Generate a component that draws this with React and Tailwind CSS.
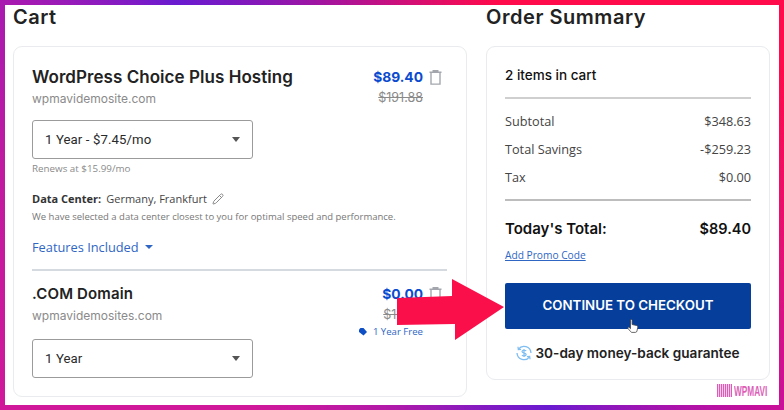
import { Pencil } from "lucide-react"

const HEAD = "font-['Inter','Noto_Sans',sans-serif]"

function Trash() {
  return (
    <svg width="13" height="15" viewBox="0 0 13 15" fill="none" stroke="#a3a7ad" strokeWidth="1.4">
      <path d="M0.5 2.2h12M4.2 2V0.7h4.6V2" />
      <path d="M2 2.5v11.6h9V2.5" />
    </svg>
  )
}

function Select({ label }) {
  return (
    <div className="w-[221px] h-[39px] border border-[#9b9b9b] rounded-[3px] flex items-center justify-between pl-[12px] pr-[12px] text-[13.2px] tracking-[0.1px] text-[#2a2a2a] font-['Roboto',sans-serif]">
      <span>{label}</span>
      <span className="w-0 h-0 border-x-[4px] border-x-transparent border-t-[5px] border-t-[#555]" />
    </div>
  )
}

function Row({ label, value }) {
  return (
    <div className="flex justify-between h-[28px] items-center text-[12.7px] text-[#444]">
      <span>{label}</span>
      <span>{value}</span>
    </div>
  )
}

export default function App() {
  return (
    <div className="relative w-[784px] h-[410px] p-[5px] overflow-hidden bg-[conic-gradient(#c8107e_0deg,#ff0a4a_28deg,#ff0a4a_70deg,#e0107a_100deg,#c8109a_118deg,#6a1bd0_142deg,#b01aa8_180deg,#d0189a_215deg,#d0189a_242deg,#c01aa0_275deg,#a81ab0_298deg,#6a1bd0_313deg,#c8107e_360deg)]">
      <div className="w-full h-full bg-white overflow-hidden flex gap-[19px] pl-[8px] font-['Open_Sans',sans-serif]">
        {/* Cart */}
        <div className="w-[454px] shrink-0">
          <h2 className={`${HEAD} text-[20px] leading-[24px] font-semibold text-[#222] mb-[17px] tracking-[0.5px]`}>Cart</h2>
          <div className="h-[351px] border border-[#e9ebee] rounded-[9px] pt-[19px] pl-[18px] pr-[19px]">
            <div className="flex justify-between">
              <div>
                <div className={`${HEAD} text-[17px] leading-[22px] font-semibold text-[#222] tracking-[0.05px]`}>WordPress Choice Plus Hosting</div>
                <div className={`${HEAD} text-[12px] leading-[22px] text-[#8a8a8a] mb-[10px]`}>wpmavidemosite.com</div>
              </div>
              <div className="flex flex-col items-end pr-[5px]">
                <div className="flex items-center gap-[6px]">
                  <span className={`${HEAD} text-[13.8px] leading-[22px] font-bold text-[#0b4bd0]`}>$89.40</span>
                  <Trash />
                </div>
                <span className={`${HEAD} text-[12.5px] leading-[20px] text-[#8a8a8a] line-through mr-[19px]`}>$191.88</span>
              </div>
            </div>
            <Select label="1 Year - $7.45/mo" />
            <div className="text-[9.8px] leading-[14px] mt-[3px] text-[#8a8a8a]">Renews at $15.99/mo</div>
            <div className="flex items-center text-[11px] leading-[16px] mt-[15px] text-[#444]">
              <span className="font-bold text-[#333] mr-[5px]">Data Center:</span>
              Germany, Frankfurt
              <Pencil size={12} className="ml-[5px] text-[#888]" />
            </div>
            <div className="text-[9.5px] leading-[14px] mt-[3px] text-[#777]">We have selected a data center closest to you for optimal speed and performance.</div>
            <div className="flex items-center text-[12.8px] leading-[18px] mt-[14px] text-[#2f66c4]">
              Features Included
              <span className="ml-[6px] w-0 h-0 border-x-[4px] border-x-transparent border-t-[4px] border-t-[#2f66c4]" />
            </div>
            <div className="h-[2px] bg-[#d5d9e0] mt-[13px] mb-[12px]" />
            <div className="flex justify-between">
              <div>
                <div className={`${HEAD} text-[15px] leading-[22px] font-semibold text-[#222] tracking-[0.15px]`}>.COM Domain</div>
                <div className={`${HEAD} text-[12px] leading-[22px] text-[#8a8a8a] mb-[12px]`}>wpmavidemosites.com</div>
              </div>
              <div className="flex flex-col items-end pr-[5px]">
                <div className="flex items-center gap-[6px]">
                  <span className={`${HEAD} text-[13.8px] leading-[22px] font-bold text-[#0b4bd0]`}>$0.00</span>
                  <Trash />
                </div>
                <span className={`${HEAD} text-[12.5px] leading-[20px] text-[#8a8a8a] line-through mr-[19px]`}>$12.99</span>
                <div className="flex items-center text-[9.6px] leading-[14px] text-[#2f66c4] mr-[19px]">
                  <svg width="8" height="8" viewBox="0 0 8 8" className="mr-[6px]">
                    <path d="M0 1.5 1.5 0H4.5L8 4 4.5 7.5 0 4Z" fill="#0f4fc6" />
                  </svg>
                  1 Year Free
                </div>
              </div>
            </div>
            <Select label="1 Year" />
          </div>
        </div>

        {/* Order summary */}
        <div className="w-[284px] shrink-0">
          <h2 className={`${HEAD} text-[20px] leading-[24px] font-semibold text-[#222] mb-[17px] tracking-[0.55px]`}>Order Summary</h2>
          <div className="h-[334px] border border-[#e9ebee] rounded-[9px] pt-[17px] px-[18px]">
            <div className={`${HEAD} text-[13.5px] leading-[22px] font-medium text-[#111] mb-[11px]`}>2 items in cart</div>
            <div className="h-[2px] bg-[#cfcfcf] mb-[9px]" />
            <Row label="Subtotal" value="$348.63" />
            <Row label="Total Savings" value="-$259.23" />
            <Row label="Tax" value="$0.00" />
            <div className="h-[2px] bg-[#bdbdbd] mt-[7px] mb-[17px]" />
            <div className={`${HEAD} flex justify-between text-[15px] leading-[22px] font-semibold text-[#111]`}>
              <span>Today's Total:</span>
              <span className="text-[14.5px]">$89.40</span>
            </div>
            <div className="text-[10.2px] leading-[14px] mt-[8px] text-[#2f66c4] underline">Add Promo Code</div>
            <div className={`${HEAD} h-[46px] mt-[21px] bg-[#063f9b] rounded-[2px] flex items-center justify-center text-[13.3px] font-semibold text-white`}>
              CONTINUE TO CHECKOUT
            </div>
            <div className={`${HEAD} flex items-center justify-center mt-[13px] text-[13.6px] leading-[22px] font-semibold text-[#222]`}>
              <svg width="16" height="16" viewBox="0 0 16 16" fill="none" stroke="#7dbdf2" className="mr-[3px]">
                <path d="M2.4 4.2A7 7 0 0 1 15 8M13.6 11.8A7 7 0 0 1 1 8" strokeWidth="1.3" />
                <path d="M2 1.8l.3 2.7 2.7-.2M14 14.2l-.3-2.7-2.7.2" strokeWidth="1.2" />
                <path d="M10.2 6C9.6 5 6 4.8 6 6.6c0 2 4.2 1 4.2 3 0 1.8-3.6 1.6-4.2.5M8 4v8" strokeWidth="1.2" />
              </svg>
              30-day money-back guarantee
            </div>
          </div>
        </div>
      </div>

      {/* Red arrow over the cart and button */}
      <svg width="110" height="64" viewBox="0 0 110 64" className="absolute left-[396px] top-[278px]">
        <path d="M1 20 56 18V1L108 29 59 62V46L1 47Z" fill="#fb0f4b" />
      </svg>

      {/* Cursor over the button */}
      <svg width="12" height="15" viewBox="0 0 12 15" className="absolute left-[627px] top-[319px]">
        <path d="M3.5 1.2c0-1 1.6-1 1.6 0v4.3l4.4 1c1 .3 1.4 1 1.2 2l-.7 3.4c-.1.8-.7 1.5-1.5 1.5H5c-.6 0-1-.3-1.4-.8L1 9.5c-.6-.9.5-1.8 1.3-1l1.2 1.2Z" fill="#fff" stroke="#444" strokeWidth="0.8" />
      </svg>

      {/* Watermark */}
      <div className="absolute left-[717px] top-[384px] flex items-center opacity-70">
        <div className="w-[15px] h-[13px] bg-[repeating-linear-gradient(90deg,#d0189a_0px,#d0189a_1px,#f3b6dd_1px,#f3b6dd_2px)]" />
        <span className="ml-[2px] w-[33px] text-[15px] leading-[13px] font-bold text-[#d0189a] font-['Liberation_Sans',sans-serif] origin-left scale-x-[0.55] whitespace-nowrap">WPMAVI</span>
      </div>
    </div>
  )
}
